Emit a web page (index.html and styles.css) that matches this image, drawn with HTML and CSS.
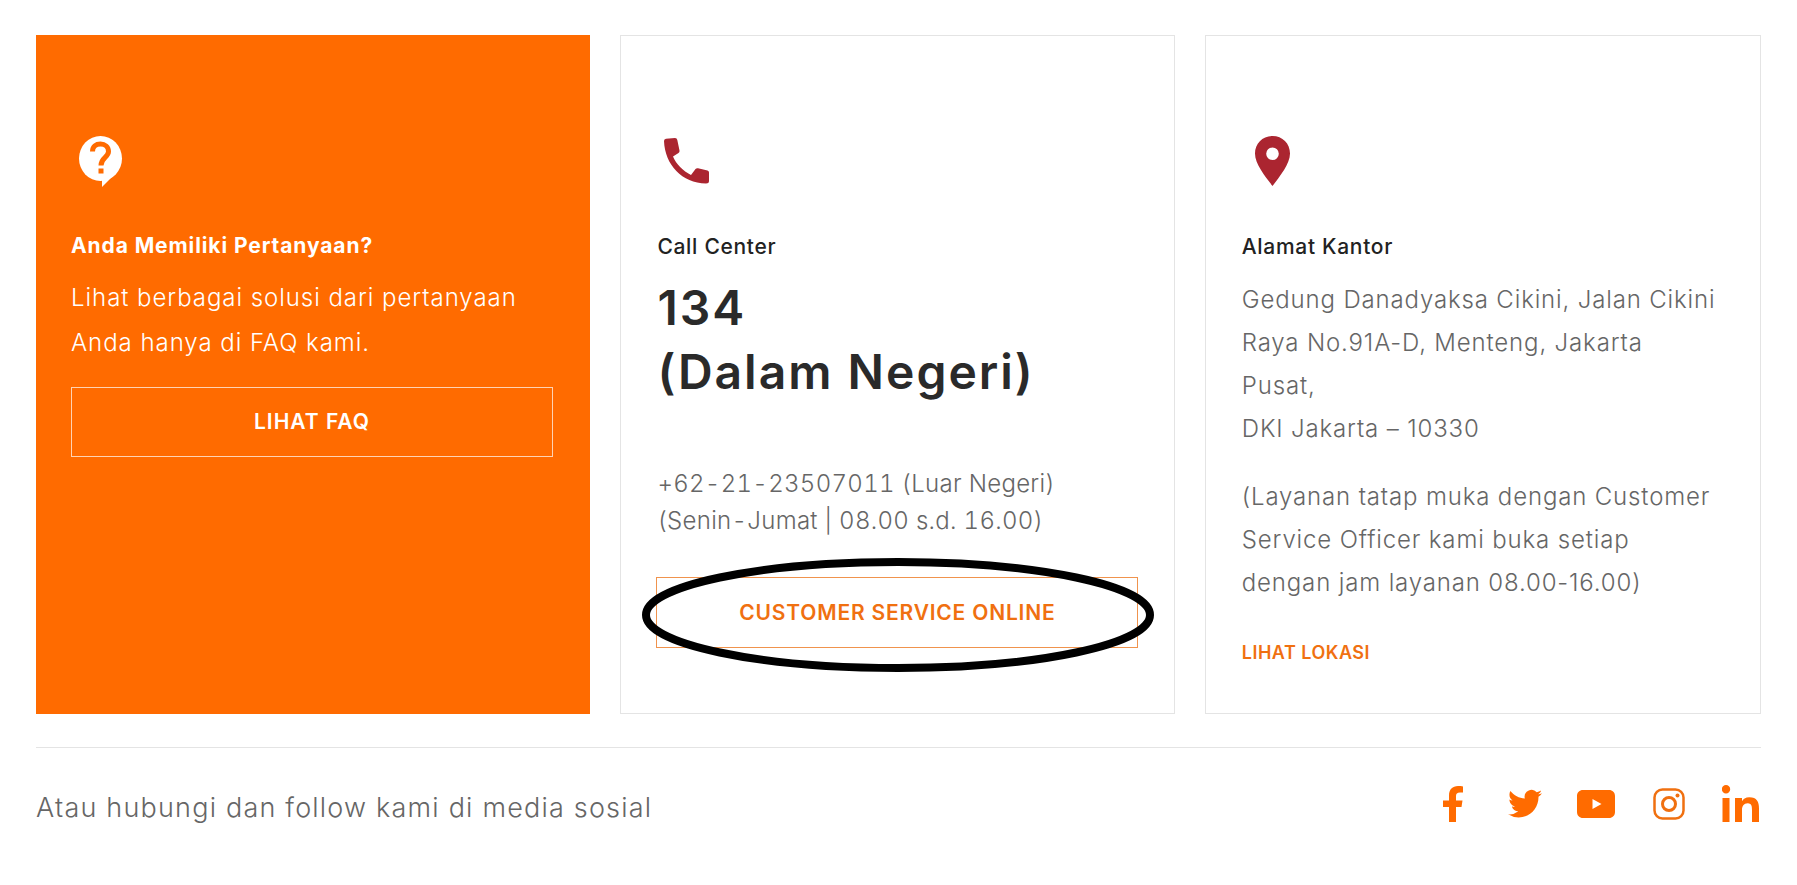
FILE: index.html
```html
<!DOCTYPE html>
<html lang="id">
<head>
  <meta charset="UTF-8">
  <title>Hubungi Kami</title>
  <link rel="stylesheet" href="styles.css">
</head>
<body>

<div class="cards">
  <div class="card card-orange">
    <div class="icon-box icon-faq">
      <svg width="44" height="51" viewBox="0 0 44 51">
        <ellipse cx="21.5" cy="22.5" rx="21.5" ry="22.5" fill="#fff"/>
        <path fill="#fff" d="M23 38V51L35 39Z"/>
        <path fill="none" stroke="#ff6b00" stroke-width="5" d="M13.5 15.500C13.500 10.500 17 8 21.500 8S29.500 11 29.500 15.500C29.500 21.500 22 21.500 22 29.500"/>
        <rect x="19.500" y="32.500" width="5" height="5" fill="#ff6b00"/>
      </svg>
    </div>
    <h4 class="card-title">Anda Memiliki Pertanyaan?</h4>
    <p class="card-text">Lihat berbagai solusi dari pertanyaan Anda hanya di FAQ kami.</p>
    <a class="btn btn-white">LIHAT FAQ</a>
  </div>

  <div class="card">
    <div class="icon-box icon-phone">
      <svg width="45" height="46" viewBox="0 0 45 46">
        <path fill="#ab2530" d="M0 3Q0 1 2 .8L11 0Q13 0 13.300 2L15.500 12.500Q15.800 14 14.500 15L9 18.500C12 26 19 33 27 37L31.500 31Q32.500 30 34 30.300L43.500 32.500Q45 33 45 34.500V43Q45 45.500 42 45.500C18 45 1 27 0 3Z"/>
      </svg>
    </div>
    <h4 class="card-title dark">Call Center</h4>
    <div class="phone">134<br>(Dalam Negeri)</div>
    <p class="phone-info">+62-21-23507011 (Luar Negeri)<br>(Senin-Jumat | 08.00 s.d. 16.00)</p>
    <a class="btn btn-orange">CUSTOMER SERVICE ONLINE</a>
    <svg class="scribble" width="514" height="116" viewBox="0 0 514 116">
      <ellipse cx="257" cy="58" rx="252" ry="53" fill="none" stroke="#000" stroke-width="8"/>
    </svg>
  </div>

  <div class="card">
    <div class="icon-box icon-pin">
      <svg width="35" height="50" viewBox="0 0 35 50">
        <path fill="#ab2530" fill-rule="evenodd" d="M17.500 0C7.500 0 0 7.500 0 17.500 0 28 10 40 17.500 50 25 40 35 28 35 17.500 35 7.500 27.500 0 17.500 0ZM17.500 11.500A6.300 6.300 0 1 1 17.500 24.100 6.300 6.300 0 0 1 17.500 11.500Z"/>
      </svg>
    </div>
    <h4 class="card-title dark">Alamat Kantor</h4>
    <p class="address">Gedung Danadyaksa Cikini, Jalan Cikini<br>Raya No.91A-D, Menteng, Jakarta<br>Pusat,<br>DKI Jakarta – 10330</p>
    <p class="address">(Layanan tatap muka dengan Customer<br>Service Officer kami buka setiap<br>dengan jam layanan 08.00-16.00)</p>
    <a class="link-orange">LIHAT LOKASI</a>
  </div>
</div>

<div class="social-row">
  <span class="social-text">Atau hubungi dan follow kami di media sosial</span>
  <div class="social-icons">
    <svg class="social-fb" width="20" height="36" viewBox="0 0 20 36"><path fill="#ff6b00" d="M6 36V21H0V14.500H6V9.500C6 3.500 9.500 0 15 0 17 0 18.800.2 20 .4V6.500H17C14 6.500 13 7.800 13 10V14.500H19.500L18.500 21H13V36Z"/></svg>
    <svg width="34" height="30" viewBox="0 0 24 21"><path fill="#ff6b00" d="M24 2.900C23.100 3.300 22.200 3.600 21.200 3.700 22.200 3.100 23 2.100 23.400 1 22.400 1.600 21.400 2 20.300 2.200A4.900 4.900 0 0 0 11.900 6.700C7.800 6.500 4.200 4.500 1.700 1.400.4 3.700 1 6.500 3.200 8 2.400 8 1.600 7.800 1 7.400 1 9.700 2.600 11.700 4.900 12.200 4.200 12.400 3.400 12.400 2.700 12.300 3.300 14.300 5.100 15.700 7.300 15.700A9.900 9.900 0 0 1 0 17.800 14 14 0 0 0 7.500 20C16.600 20 21.800 12.300 21.500 5.400 22.500 4.700 23.300 3.900 24 2.900Z"/></svg>
    <svg width="38" height="28" viewBox="0 0 38 28"><path fill="#ff6b00" fill-rule="evenodd" d="M6 0H32C35.500 0 38 2.500 38 6V22C38 25.500 35.500 28 32 28H6C2.500 28 0 25.500 0 22V6C0 2.500 2.500 0 6 0ZM15.500 9V19L24.500 14Z"/></svg>
    <svg class="social-ig" width="32" height="32" viewBox="0 0 32 32"><rect x="1.500" y="1.500" width="29" height="29" rx="8" fill="none" stroke="#f07010" stroke-width="2.500"/><circle cx="16" cy="16" r="6.500" fill="none" stroke="#f07010" stroke-width="3"/><circle cx="24.500" cy="7.500" r="2" fill="#f07010"/></svg>
    <svg width="37" height="37" viewBox="0 0 37 37"><path fill="#ff6b00" d="M.5 13H7.500V37H.5ZM4 0A4.200 4.200 0 1 1 4 8.400 4.200 4.200 0 0 1 4 0ZM13 13H20V16.300C21 14.300 23.500 12.300 27.300 12.300 35 12.300 37 17 37 23.500V37H30V25C30 22 29.900 18.200 25.800 18.200S20 21.500 20 24.800V37H13Z"/></svg>
  </div>
</div>

</body>
</html>
```

FILE: styles.css
```css
body {
  margin: 0;
  background: #fff;
  color: #222;
  font-family: 'Inter', 'Noto Sans', sans-serif;
}

.cards {
  display: flex;
  gap: 30px;
  padding: 35px 36px 0;
}

.card {
  position: relative;
  box-sizing: border-box;
  width: 554.4px;
  height: 679px;
  padding: 99px 36px 0;
  border: 1px solid #e4e4e4;
}

.card:last-child {
  width: 556px;
}

.card-orange {
  padding-left: 34px;
  background: #ff6b00;
  border-color: #ff6b00;
  color: #fff;
}

.icon-box {
  display: flex;
  align-items: center;
  height: 52px;
}

.icon-faq {
  padding-left: 8px;
}

.icon-phone {
  padding-left: 7px;
}

.icon-pin {
  padding-left: 13px;
}

.card-title {
  margin: 45px 0 0;
  font-size: 21px;
  font-weight: 700;
  letter-spacing: .9px;
  line-height: 28px;
}

.card-title.dark {
  margin-top: 46px;
  font-weight: 500;
  letter-spacing: .7px;
}

.card-text {
  margin: 16px 0 0;
  font-size: 24px;
  font-weight: 300;
  letter-spacing: .95px;
  line-height: 44.5px;
}

.btn {
  display: block;
  box-sizing: border-box;
  width: 482px;
  height: 70px;
  line-height: 68px;
  text-align: center;
  font-size: 21px;
  font-weight: 600;
}

.btn-white {
  margin-top: 22px;
  border: 1px solid #ffd3b3;
  color: #fff;
  letter-spacing: 1px;
}

.btn-orange {
  height: 71px;
  line-height: 70px;
  margin-top: 38px;
  margin-left: -1px;
  border: 1px solid #f0934d;
  color: #f07010;
  letter-spacing: .8px;
}

.phone {
  margin-top: 15px;
  font-size: 48px;
  font-weight: 600;
  letter-spacing: 2px;
  line-height: 64px;
  color: #2a2a2a;
}

.phone-info {
  margin: 61px 0 0;
  font-size: 24px;
  font-weight: 300;
  font-variant-numeric: tabular-nums;
  letter-spacing: .3px;
  line-height: 37px;
  color: #666;
}

.address {
  margin: 17px 0 0;
  font-size: 24px;
  font-weight: 300;
  letter-spacing: .85px;
  line-height: 43px;
  color: #666;
}

.address + .address {
  margin-top: 25px;
}

.link-orange {
  display: block;
  margin-top: 38px;
  font-size: 18px;
  font-weight: 600;
  letter-spacing: .5px;
  color: #f07010;
}

.scribble {
  position: absolute;
  left: 20px;
  top: 521px;
}

.social-row {
  display: flex;
  justify-content: space-between;
  align-items: flex-start;
  margin: 33px 36px 0;
  padding: 37px 2px 0 0;
  border-top: 1px solid #e4e4e4;
}

.social-text {
  margin-top: 4px;
  font-size: 27px;
  font-weight: 300;
  letter-spacing: 1.2px;
  line-height: 37px;
  color: #666;
}

.social-icons {
  display: flex;
  align-items: center;
  gap: 35px;
}

.social-fb {
  margin-right: 10px;
}

.social-ig {
  margin: 0 2px 0 3px;
}
```
